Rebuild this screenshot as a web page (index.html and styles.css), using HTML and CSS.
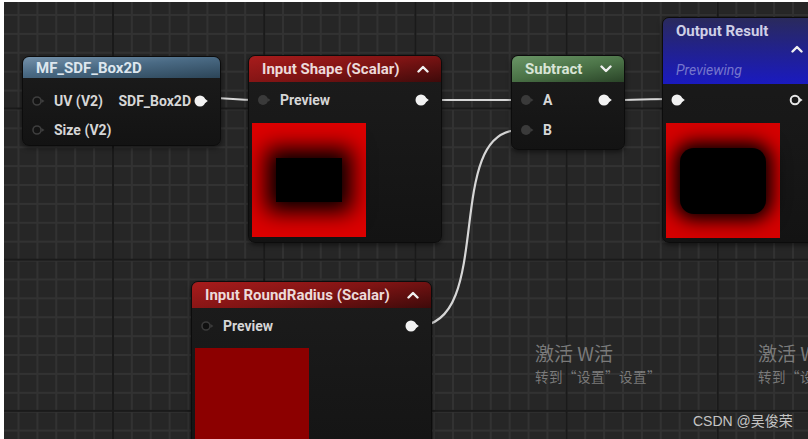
FILE: index.html
```html
<!DOCTYPE html>
<html lang="zh-CN">
<head>
    <meta charset="UTF-8">
    <title>Material Graph</title>
    <link rel="stylesheet" href="styles.css">
</head>
<body>
    <div class="canvas">
        <!-- Dây nối giữa các node -->
        <svg class="wires" width="804" height="437" viewBox="0 0 804 437">
            <path d="M205 96 C 228 96, 230 98, 253 98" />
            <path d="M423 98 L 515 98" />
            <path d="M606 98 C 630 98, 645 97, 668 97" />
            <path d="M413 324 C 492 324, 438 128, 515 128" />
        </svg>

        <!-- MF_SDF_Box2D -->
        <div class="node node-fn">
            <div class="node-head head-fn">
                <span class="title">MF_SDF_Box2D</span>
            </div>
            <div class="node-body body-fn">
                <div class="pin-row">
                    <div class="pin-in">
                        <svg class="pin" viewBox="0 0 14 12"><circle cx="6" cy="6" r="4" fill="#141414" stroke="#3e3e3e" stroke-width="1.6"/><path d="M10.5 4 L13.5 6 L10.5 8 Z" fill="#3e3e3e"/></svg>
                        <span>UV (V2)</span>
                    </div>
                    <div class="pin-out">
                        <span>SDF_Box2D</span>
                        <svg class="pin" viewBox="0 0 14 12"><circle cx="6" cy="6" r="5.5" fill="#f2f2f2"/><path d="M10.5 3.5 L13.8 6 L10.5 8.5 Z" fill="#f2f2f2"/></svg>
                    </div>
                </div>
                <div class="pin-row">
                    <div class="pin-in">
                        <svg class="pin" viewBox="0 0 14 12"><circle cx="6" cy="6" r="4" fill="#141414" stroke="#3e3e3e" stroke-width="1.6"/><path d="M10.5 4 L13.5 6 L10.5 8 Z" fill="#3e3e3e"/></svg>
                        <span>Size (V2)</span>
                    </div>
                </div>
            </div>
        </div>

        <!-- Input Shape -->
        <div class="node node-shape">
            <div class="node-head head-red">
                <span class="title">Input Shape (Scalar)</span>
                <svg class="chev" viewBox="0 0 12 8"><path d="M1.5 6.5 L6 2 L10.5 6.5" /></svg>
            </div>
            <div class="node-body">
                <div class="pin-row">
                    <div class="pin-in">
                        <svg class="pin" viewBox="0 0 14 12"><circle cx="6" cy="6" r="5" fill="#3a3a3a"/><path d="M10.5 4 L13.5 6 L10.5 8 Z" fill="#3a3a3a"/></svg>
                        <span>Preview</span>
                    </div>
                    <div class="pin-out">
                        <svg class="pin" viewBox="0 0 14 12"><circle cx="6" cy="6" r="5.5" fill="#f2f2f2"/><path d="M10.5 3.5 L13.8 6 L10.5 8.5 Z" fill="#f2f2f2"/></svg>
                    </div>
                </div>
                <div class="preview preview-shape"><div class="hole"></div></div>
            </div>
        </div>

        <!-- Subtract -->
        <div class="node node-sub">
            <div class="node-head head-green">
                <span class="title">Subtract</span>
                <svg class="chev" viewBox="0 0 12 8"><path d="M1.5 1.5 L6 6 L10.5 1.5" /></svg>
            </div>
            <div class="node-body">
                <div class="pin-row">
                    <div class="pin-in">
                        <svg class="pin" viewBox="0 0 14 12"><circle cx="6" cy="6" r="5" fill="#3a3a3a"/><path d="M10.5 4 L13.5 6 L10.5 8 Z" fill="#3a3a3a"/></svg>
                        <span>A</span>
                    </div>
                    <div class="pin-out">
                        <svg class="pin" viewBox="0 0 14 12"><circle cx="6" cy="6" r="5.5" fill="#f2f2f2"/><path d="M10.5 3.5 L13.8 6 L10.5 8.5 Z" fill="#f2f2f2"/></svg>
                    </div>
                </div>
                <div class="pin-row">
                    <div class="pin-in">
                        <svg class="pin" viewBox="0 0 14 12"><circle cx="6" cy="6" r="5" fill="#3a3a3a"/><path d="M10.5 4 L13.5 6 L10.5 8 Z" fill="#3a3a3a"/></svg>
                        <span>B</span>
                    </div>
                </div>
            </div>
        </div>

        <!-- Output Result -->
        <div class="node node-out">
            <div class="node-head head-out">
                <span class="title">Output Result</span>
                <div class="chev-row">
                    <svg class="chev" viewBox="0 0 12 8"><path d="M1.5 6.5 L6 2 L10.5 6.5" /></svg>
                </div>
                <span class="sub-title">Previewing</span>
            </div>
            <div class="node-body body-out">
                <div class="pin-row">
                    <div class="pin-in">
                        <svg class="pin" viewBox="0 0 14 12"><circle cx="6" cy="6" r="5.5" fill="#f2f2f2"/><path d="M10.5 3.5 L13.8 6 L10.5 8.5 Z" fill="#f2f2f2"/></svg>
                    </div>
                    <div class="pin-out">
                        <svg class="pin" viewBox="0 0 14 12"><circle cx="6" cy="6" r="4.3" fill="none" stroke="#e6e6e6" stroke-width="2"/><path d="M10.5 3.8 L13.6 6 L10.5 8.2 Z" fill="#e6e6e6"/></svg>
                    </div>
                </div>
                <div class="preview preview-out"><div class="hole"></div></div>
            </div>
        </div>

        <!-- Input RoundRadius -->
        <div class="node node-radius">
            <div class="node-head head-red">
                <span class="title">Input RoundRadius (Scalar)</span>
                <svg class="chev" viewBox="0 0 12 8"><path d="M1.5 6.5 L6 2 L10.5 6.5" /></svg>
            </div>
            <div class="node-body">
                <div class="pin-row">
                    <div class="pin-in">
                        <svg class="pin" viewBox="0 0 14 12"><circle cx="6" cy="6" r="4" fill="#101010" stroke="#3a3a3a" stroke-width="1.6"/><path d="M10.5 4 L13.5 6 L10.5 8 Z" fill="#3a3a3a"/></svg>
                        <span>Preview</span>
                    </div>
                    <div class="pin-out">
                        <svg class="pin" viewBox="0 0 14 12"><circle cx="6" cy="6" r="5.5" fill="#f2f2f2"/><path d="M10.5 3.5 L13.8 6 L10.5 8.5 Z" fill="#f2f2f2"/></svg>
                    </div>
                </div>
                <div class="preview preview-radius"></div>
            </div>
        </div>

        <!-- Watermark -->
        <div class="activate activate-1">
            <div class="act-big">激活 W活</div>
            <div class="act-small">转到“设置”设置”</div>
        </div>
        <div class="activate activate-2">
            <div class="act-big">激活 W</div>
            <div class="act-small">转到“设</div>
        </div>
        <div class="credit">CSDN @吴俊荣</div>
    </div>
</body>
</html>
```

FILE: styles.css
```css
body {
    margin: 0;
    padding: 2px 0 0 4px;
    background: #ffffff;
    height: 439px;
    box-sizing: border-box;
    overflow: hidden;
    font-family: Roboto, "Noto Sans", sans-serif;
}

/* Lưới nền */
.canvas {
    position: relative;
    width: 804px;
    height: 437px;
    overflow: hidden;
    background-color: #262626;
    background-image:
        linear-gradient(90deg, #1a1a1a 2px, transparent 2px),
        linear-gradient(180deg, #1a1a1a 2px, transparent 2px),
        linear-gradient(90deg, #323232 2px, transparent 2px),
        linear-gradient(180deg, #323232 2px, transparent 2px);
    background-size:
        151.2px 100%,
        100% 151.2px,
        18.9px 100%,
        100% 18.9px;
    background-position:
        108px 0,
        0 105.5px,
        13.5px 0,
        0 12px;
}

.wires {
    position: absolute;
    left: 0;
    top: 0;
}

.wires path {
    fill: none;
    stroke: #d6d6d6;
    stroke-width: 2.2;
}

/* Node */
.node {
    position: absolute;
    border: 1px solid #0c0c0c;
    border-radius: 7px;
    overflow: hidden;
    background: linear-gradient(#1c1c1c, #131313);
    box-shadow: 0 2px 5px rgba(0, 0, 0, 0.5);
    color: #d6d6d6;
    font-size: 14px;
    font-weight: 700;
}

.node-fn { left: 18px; top: 54px; width: 197px; height: 88px; }
.node-shape { left: 244px; top: 53px; width: 192px; height: 186px; }
.node-sub { left: 507px; top: 53px; width: 112px; height: 93px; }
.node-out { left: 658px; top: 15px; width: 152px; height: 224px; }
.node-radius { left: 187px; top: 279px; width: 239px; height: 200px; }

.node-head {
    display: flex;
    align-items: center;
    justify-content: space-between;
    height: 26px;
    padding: 0 12px 0 13px;
    box-sizing: border-box;
}

.head-fn {
    height: 21px;
    background: linear-gradient(175deg, #7592ab 0%, #4a6a84 45%, #2c4558 100%);
    color: #dde6ee;
}

.head-red {
    background: linear-gradient(170deg, #a81c1c 0%, #801414 50%, #3e0a0a 100%);
    color: #ecdada;
}

.head-green {
    background: linear-gradient(170deg, #6a9566 0%, #4c7448 50%, #2a4428 100%);
    color: #d8e4d6;
}

.head-out {
    height: 66px;
    flex-direction: column;
    align-items: stretch;
    justify-content: flex-start;
    padding: 5px 12px 0 13px;
    background: linear-gradient(180deg, #2a2a5c 0%, #22228a 45%, #1a1ac0 100%);
    color: #cfcfe6;
}

.title {
    font-size: 15px;
    line-height: 16px;
    white-space: nowrap;
}

.chev {
    width: 12px;
    height: 8px;
}

.chev path {
    fill: none;
    stroke: #f0f0f0;
    stroke-width: 2.4;
    stroke-linecap: round;
    stroke-linejoin: round;
}

.chev-row {
    display: flex;
    justify-content: flex-end;
    align-items: center;
    height: 20px;
}

.sub-title {
    margin-top: 2px;
    font-weight: 400;
    font-style: italic;
    font-size: 14px;
    line-height: 18px;
    color: #7676cc;
}

.node-body {
    padding-top: 3px;
}

.body-fn {
    padding-top: 8px;
}

.body-fn .pin-row {
    height: 29px;
}

.body-out {
    padding-top: 1px;
}

.pin-row {
    display: flex;
    align-items: center;
    justify-content: space-between;
    height: 30px;
}

.pin-in {
    display: flex;
    align-items: center;
    gap: 9px;
    padding-left: 8px;
}

.pin-out {
    display: flex;
    align-items: center;
    gap: 3px;
    padding-right: 12px;
}

.pin {
    width: 14px;
    height: 12px;
    display: block;
}

/* Ảnh xem trước */
.preview {
    width: 114px;
    height: 114px;
    margin: 8px 0 0 3px;
    display: flex;
    align-items: center;
    justify-content: center;
}

.preview-shape {
    background: #dc0000;
}

.preview-shape .hole {
    width: 66px;
    height: 44px;
    background: #000;
    box-shadow: 0 0 22px 10px #000;
}

.preview-out {
    height: 115px;
    background: #d40000;
}

.preview-out .hole {
    width: 86px;
    height: 66px;
    border-radius: 14px;
    background: #000;
    box-shadow: 0 0 18px 6px #000;
}

.preview-radius {
    margin-top: 7px;
    background: #8c0000;
}

/* Chữ mờ phía dưới */
.activate {
    position: absolute;
    color: rgba(150, 150, 150, 0.75);
    font-family: "Noto Sans CJK SC", "Liberation Sans", sans-serif;
    white-space: nowrap;
}

.activate-1 { left: 531px; top: 337px; }
.activate-2 { left: 754px; top: 337px; }

.act-big {
    font-size: 19px;
    line-height: 28px;
}

.act-small {
    font-size: 13.5px;
    line-height: 18px;
    letter-spacing: 0.5px;
}

.credit {
    position: absolute;
    left: 689px;
    top: 409px;
    color: #c4c4c4;
    font-family: "Liberation Sans", "Noto Sans CJK SC", sans-serif;
    font-size: 14px;
    line-height: 20px;
}
```
